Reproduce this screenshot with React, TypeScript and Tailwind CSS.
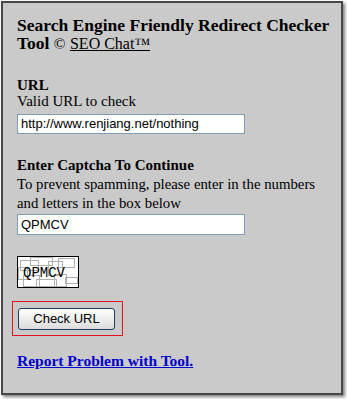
import React from "react";

function Captcha() {
  return (
    <div className="relative w-[62px] h-[32px] border border-black bg-white overflow-hidden">
      <svg className="absolute inset-0" width="60" height="30" viewBox="0 0 60 30">
        <g fill="none" stroke="#b0b0b0" strokeWidth="1">
          <rect x="2.5" y="3.5" width="18" height="10" />
          <rect x="12.5" y="0.5" width="22" height="8" />
          <rect x="30.5" y="4.5" width="14" height="14" />
          <rect x="40.5" y="1.5" width="16" height="9" />
          <rect x="5.5" y="18.5" width="16" height="11" />
          <rect x="18.5" y="22.5" width="20" height="7" />
          <rect x="36.5" y="17.5" width="12" height="12" />
          <rect x="47.5" y="20.5" width="12" height="6" />
          <rect x="0.5" y="10.5" width="9" height="12" />
        </g>
      </svg>
      <div className="absolute left-[5px] top-[9px] text-[14px] leading-[14px] text-black font-['Liberation_Mono',monospace]">
        QPMCV
      </div>
    </div>
  );
}

export default function App() {
  return (
    <div className="w-[347px] h-[399px] bg-white pt-[1px] pl-[1px]">
      <div className="w-[342px] h-[394px] border-2 border-[#474747] bg-[#cacaca] shadow-[2px_2px_3px_rgba(0,0,0,0.5)] pl-[14px] pt-[13px] font-['Liberation_Serif',serif] text-black">
        <div className="text-[17.5px] leading-[18px] font-bold">
          Search Engine Friendly Redirect Checker
          <br />
          Tool <span className="font-normal text-[15.5px]">©</span>{" "}
          <a className="font-normal text-[16px] underline text-black">SEO Chat™</a>
        </div>

        <div className="mt-[24px] text-[15px] leading-[16px] font-bold">URL</div>
        <div className="text-[15px] leading-[16px]">Valid URL to check</div>
        <div className="mt-[5px] w-[228px] h-[20px] border border-[#7f9db9] bg-white pl-[3px] text-[13px] leading-[18px] font-['Liberation_Sans',sans-serif]">
          http://www.renjiang.net/nothing
        </div>

        <div className="mt-[21px] text-[15px] leading-[20px] font-bold">Enter Captcha To Continue</div>
        <div className="text-[14.8px] leading-[19px]">
          To prevent spamming, please enter in the numbers
          <br />
          and letters in the box below
        </div>
        <div className="mt-[1px] w-[228px] h-[21px] border border-[#7f9db9] bg-white pl-[3px] text-[13px] leading-[19px] font-['Liberation_Sans',sans-serif]">
          QPMCV
        </div>

        <div className="mt-[21px]">
          <Captcha />
        </div>

        <div className="mt-[13px] -ml-[5px] w-[111px] h-[35px] border border-[#e0141e] pl-[5px] pt-[6px]">
          <div className="w-[97px] h-[22px] rounded-[3px] border border-[#1f3f61] bg-gradient-to-b from-white to-[#dcdcdc] flex items-center justify-center text-[13px] font-['Liberation_Sans',sans-serif] text-black">
            Check URL
          </div>
        </div>

        <div className="mt-[16px] text-[15.5px] leading-[18px] font-bold">
          <a className="text-[#0000cc] underline">Report Problem with Tool.</a>
        </div>
      </div>
    </div>
  );
}
